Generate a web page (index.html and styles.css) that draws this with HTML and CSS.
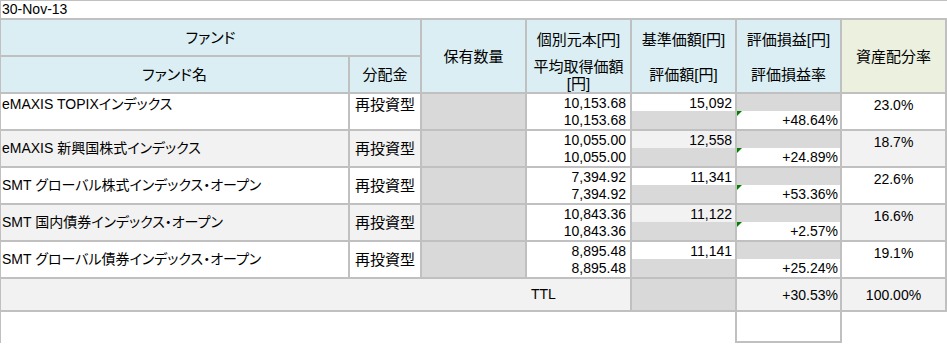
FILE: index.html
```html
<!DOCTYPE html>
<html lang="ja">
<head>
<meta charset="utf-8">
<title>Fund</title>
<link rel="stylesheet" href="styles.css">
</head>
<body>
<div class="sheet">
  <div class="cell date">30-Nov-13</div>

  <div class="cell hd c12">ファンド</div>
  <div class="cell hd r23 c3 mid">保有数量</div>
  <div class="cell hd r23 c4 stack">
    <span class="l1">個別元本[円]</span>
    <span class="l2">平均取得価額<br>[円]</span>
  </div>
  <div class="cell hd r23 c5 stack">
    <span class="l1">基準価額[円]</span>
    <span class="l3">評価額[円]</span>
  </div>
  <div class="cell hd r23 c6 stack">
    <span class="l1">評価損益[円]</span>
    <span class="l3">評価損益率</span>
  </div>
  <div class="cell hd r23 c7 alloc-hd mid">資産配分率</div>
  <div class="cell hd">ファンド名</div>
  <div class="cell hd">分配金</div>

  <!-- row 1 -->
  <div class="cell name top">eMAXIS TOPIXインデックス</div>
  <div class="cell div top">再投資型</div>
  <div class="cell gray"></div>
  <div class="cell cost"><span>10,153.68</span><span>10,153.68</span></div>
  <div class="cell split"><span class="up">15,092</span><span class="dn gray"></span></div>
  <div class="cell split"><span class="up gray"></span><span class="dn flag">+48.64%</span></div>
  <div class="cell pct">23.0%</div>

  <!-- row 2 -->
  <div class="cell name alt">eMAXIS 新興国株式インデックス</div>
  <div class="cell div alt">再投資型</div>
  <div class="cell gray"></div>
  <div class="cell cost"><span>10,055.00</span><span>10,055.00</span></div>
  <div class="cell split"><span class="up alt">12,558</span><span class="dn gray"></span></div>
  <div class="cell split"><span class="up gray"></span><span class="dn flag">+24.89%</span></div>
  <div class="cell pct alt">18.7%</div>

  <!-- row 3 -->
  <div class="cell name">SMT グローバル株式インデックス・オープン</div>
  <div class="cell div">再投資型</div>
  <div class="cell gray"></div>
  <div class="cell cost"><span>7,394.92</span><span>7,394.92</span></div>
  <div class="cell split"><span class="up">11,341</span><span class="dn gray"></span></div>
  <div class="cell split"><span class="up gray"></span><span class="dn flag">+53.36%</span></div>
  <div class="cell pct">22.6%</div>

  <!-- row 4 -->
  <div class="cell name alt">SMT 国内債券インデックス・オープン</div>
  <div class="cell div alt">再投資型</div>
  <div class="cell gray"></div>
  <div class="cell cost"><span>10,843.36</span><span>10,843.36</span></div>
  <div class="cell split"><span class="up alt">11,122</span><span class="dn gray"></span></div>
  <div class="cell split"><span class="up gray"></span><span class="dn flag">+2.57%</span></div>
  <div class="cell pct alt">16.6%</div>

  <!-- row 5 -->
  <div class="cell name">SMT グローバル債券インデックス・オープン</div>
  <div class="cell div">再投資型</div>
  <div class="cell gray"></div>
  <div class="cell cost"><span>8,895.48</span><span>8,895.48</span></div>
  <div class="cell split"><span class="up">11,141</span><span class="dn gray"></span></div>
  <div class="cell split"><span class="up gray"></span><span class="dn">+25.24%</span></div>
  <div class="cell pct">19.1%</div>

  <!-- total -->
  <div class="cell alt ttl-pad"></div>
  <div class="cell alt ttl">TTL</div>
  <div class="cell gray"></div>
  <div class="cell alt ttl-num">+30.53%</div>
  <div class="cell alt ttl-pct">100.00%</div>

  <!-- trailing -->
  <div class="cell blank"></div>
  <div class="cell empty"></div>
</div>
</body>
</html>
```

FILE: styles.css
```css
html, body {
  margin: 0;
  padding: 0;
  background: #ffffff;
}

body {
  font-family: "Liberation Sans", "Noto Sans CJK JP", sans-serif;
  font-size: 14px;
  color: #000000;
  font-feature-settings: "palt";
}

.sheet {
  display: grid;
  grid-template-columns: 349px 72px 105px 105px 105px 105px 105px;
  grid-template-rows: 19px 37px 37px 37px 37px 37px 37px 37px 33px 31px;
  border-top: 1px solid #c0c0c0;
  border-left: 1px solid #c0c0c0;
  width: 946px;
}

.cell {
  box-sizing: border-box;
  border-right: 2px solid #c0c0c0;
  border-bottom: 2px solid #c0c0c0;
  background: #ffffff;
  overflow: hidden;
  white-space: nowrap;
  line-height: 17px;
}

.date {
  grid-column: 1 / -1;
  border-right: none;
  padding-left: 1px;
  line-height: 17px;
}

.hd {
  background: #daeef3;
  font-size: 15px;
  display: flex;
  align-items: center;
  justify-content: center;
}

.c12 { grid-column: 1 / 3; }
.r23 { grid-row: 2 / 4; }
.c3 { grid-column: 3; }
.c4 { grid-column: 4; }
.c5 { grid-column: 5; }
.c6 { grid-column: 6; }
.c7 { grid-column: 7; }

.alloc-hd { background: #ebf1de; }

.stack {
  flex-direction: column;
  justify-content: flex-start;
  padding-top: 12px;
  text-align: center;
}
.stack .l1 { line-height: 16px; }
.stack .l2 { line-height: 17px; margin-top: 10px; }
.stack .l3 { line-height: 16px; margin-top: 19px; }

.name {
  padding-left: 1px;
  display: flex;
  align-items: center;
}
.div {
  font-size: 15px;
  display: flex;
  align-items: center;
  justify-content: center;
}
.top {
  align-items: flex-start;
  padding-top: 2px;
}

.alt { background: #f2f2f2; }
.gray { background: #d9d9d9; }

.cost {
  display: flex;
  flex-direction: column;
  align-items: flex-end;
  padding-right: 4px;
}
.cost span:first-child { height: 17px; padding-top: 1px; box-sizing: border-box; line-height: 17px; }
.cost span:last-child { height: 18px; line-height: 18px; }

.split {
  display: flex;
  flex-direction: column;
}
.split .up {
  display: block;
  height: 17px;
  text-align: right;
  padding-right: 3px;
  padding-top: 1px;
  box-sizing: border-box;
}
.split .dn {
  display: block;
  height: 18px;
  line-height: 18px;
  text-align: right;
  padding-right: 2px;
  position: relative;
}
.split .dn.flag::before {
  content: "";
  position: absolute;
  left: 0;
  top: 0;
  border-top: 5px solid #008000;
  border-right: 5px solid transparent;
}

.pct {
  text-align: center;
  padding-top: 3px;
}

.ttl-pad {
  grid-column: 1 / 4;
  border-right: none;
}
.ttl {
  padding-left: 4px;
  display: flex;
  align-items: center;
}
.ttl-num {
  display: flex;
  align-items: center;
  justify-content: flex-end;
  padding-right: 2px;
  padding-top: 2px;
}
.ttl-pct {
  display: flex;
  align-items: center;
  justify-content: center;
  padding-top: 2px;
}

.blank {
  grid-column: 1 / 6;
  border-bottom: none;
}
.empty {
  grid-column: 6;
}
```
